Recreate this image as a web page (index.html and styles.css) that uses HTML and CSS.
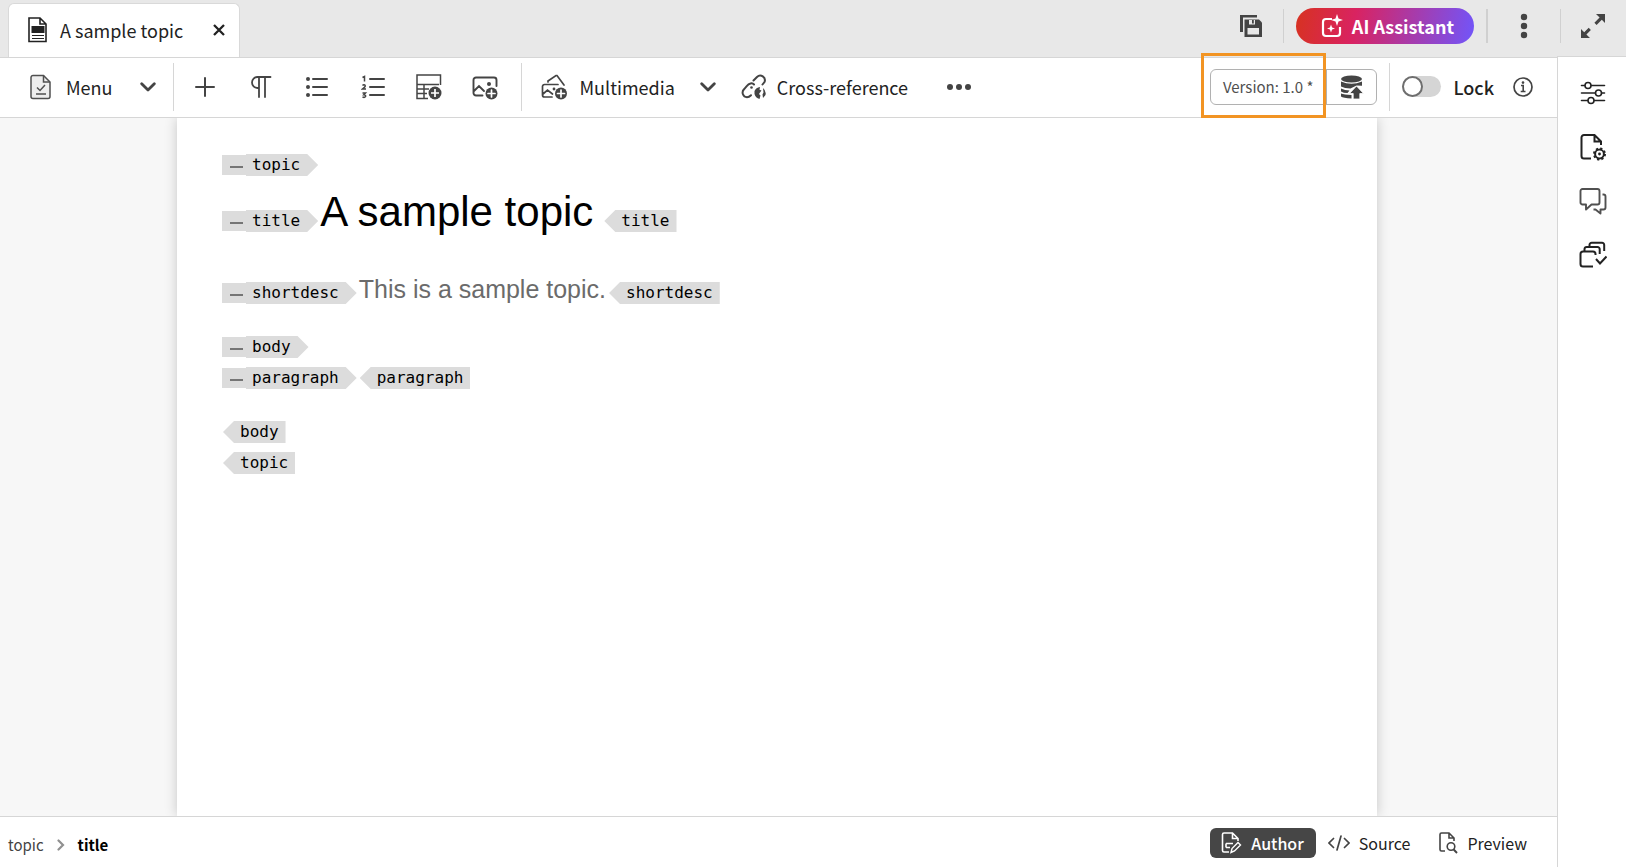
FILE: index.html
```html
<!DOCTYPE html>
<html lang="en">
<head>
<meta charset="utf-8">
<title>A sample topic</title>
<link rel="stylesheet" href="styles.css">
</head>
<body>
<div class="app">
  <header class="tabbar">
    <div class="tab">
      <svg class="icon" width="20" height="26" viewBox="0 0 20 26" fill="none" stroke="#222" stroke-width="1.6"><path d="M1 1h11l6 6v17.500H1zM12 1v6h6"/><path d="M3.500 9h13v7h-13z" fill="#222" stroke="none"/><path d="M4 18.500h12M4 21.500h12" stroke-width="1.200"/></svg>
      <span class="tab-title">A sample topic</span>
      <button class="plain tab-close" aria-label="Close tab"><svg width="12" height="12" viewBox="0 0 12 12" fill="none" stroke="#222" stroke-width="2.300"><path d="M1 1l10 10M11 1L1 11"/></svg></button>
    </div>
    <div class="header-actions">
      <button class="plain save" aria-label="Save all"><svg width="24" height="24" viewBox="0 0 24 24"><path d="M1 1h17v2.500H4V18H1z" fill="#444"/><path d="M5.500 5.500H20l3 3V23H5.500z" fill="#444"/><path d="M10 6h6v4.500h-6zM8.500 14h11.500v6.500H8.500z" fill="#e8e8e8"/><path d="M13 6h1.800v3.500H13z" fill="#444"/></svg></button>
      <span class="bar"></span>
      <button class="ai"><svg width="22" height="24" viewBox="0 0 22 24" fill="none" stroke="#fff" stroke-width="2.200"><path d="M11 5H5a3 3 0 0 0-3 3v11a3 3 0 0 0 3 3h11a3 3 0 0 0 3-3v-6"/><path d="M16 0l1.500 4.500L22 6l-4.500 1.500L16 12l-1.500-4.500L10 6l4.500-1.500zM10 10.500l1.100 3 2.900 1-2.900 1.100L10 18.500l-1.100-2.900L6 14.500l2.900-1z" fill="#fff" stroke="none"/></svg>AI Assistant</button>
      <span class="bar bar-wide"></span>
      <button class="plain more" aria-label="More options"><svg width="8" height="26" viewBox="0 0 8 26" fill="#444"><circle cx="4" cy="4" r="3.200"/><circle cx="4" cy="13" r="3.200"/><circle cx="4" cy="22" r="3.200"/></svg></button>
      <span class="bar"></span>
      <button class="plain expand" aria-label="Expand"><svg width="26" height="26" viewBox="0 0 26 26" fill="#444"><path d="M16 1h9v9l-3.200-3.200-5.200 5.200-2.200-2.200 5.200-5.200zM10 25H1V16l3.200 3.200 4.500-4.500 2.200 2.200-4.500 4.500z"/></svg></button>
    </div>
  </header>

  <main class="editor">
    <div class="toolbar" role="toolbar" aria-label="Editing">
      <button class="plain menu"><svg width="26" height="26" viewBox="0 0 26 26" fill="none" stroke="#505050" stroke-width="1.500"><path d="M6 1.500h10.500L23 8v14.500a2 2 0 0 1-2 2H6a2 2 0 0 1-2-2v-19a2 2 0 0 1 2-2z" fill="#eee"/><path d="M16.500 1.500V8H23M9 20h10M10 13.500l3 3 5-5.500"/></svg><span>Menu</span><svg class="chevron" width="16" height="10" viewBox="0 0 16 10" fill="none" stroke="#444" stroke-width="2.800" stroke-linecap="round" stroke-linejoin="round"><path d="M1.700 1.700L8 8l6.300-6.300"/></svg></button>
      <span class="rule"></span>
      <div class="tools">
        <button class="plain tool" aria-label="Insert element"><svg width="20" height="20" viewBox="0 0 20 20" stroke="#444" stroke-width="2" stroke-linecap="round"><path d="M1 10h18M10 1v18"/></svg></button>
        <button class="plain tool" aria-label="Paragraph"><svg width="24" height="24" viewBox="0 0 24 24" fill="none" stroke="#444" stroke-width="1.800" stroke-linecap="round"><path d="M21.500 2H8.500a5.200 5.200 0 0 0 0 11H10M10 2v20M16 2v20"/></svg></button>
        <button class="plain tool" aria-label="Bulleted list"><svg width="24" height="24" viewBox="0 0 24 24" fill="#444" stroke="#444" stroke-width="2" stroke-linecap="round"><path d="M8 4h14M8 12h14M8 20h14"/><g stroke="none"><circle cx="3" cy="4" r="2"/><circle cx="3" cy="12" r="2"/><circle cx="3" cy="20" r="2"/></g></svg></button>
        <button class="plain tool" aria-label="Numbered list"><svg width="24" height="26" viewBox="0 0 24 26" fill="none" stroke="#444" stroke-width="1.500"><path d="M9 5h14M9 13h14M9 21h14" stroke-width="2" stroke-linecap="round"/><path d="M1.500 3.500l2-1v5M1.500 11.500q1-1 2.300-.5 1 1-.3 2.200L1.500 15h3.500M1.500 19h3l-1.700 1.800q2.200 0 1.700 1.800-1 1.300-3 .4"/></svg></button>
        <button class="plain tool" aria-label="Table"><svg width="26" height="26" viewBox="0 0 26 26" fill="none" stroke="#444" stroke-width="1.500"><path d="M12 24.500H1V1h23.500v10M1 10.500h22M1 15h12M1 19.500h10M8 10.500v14"/><circle cx="19" cy="19" r="6.500" fill="#444" stroke="none"/><path d="M15 19h8M19 15v8" stroke="#fff" stroke-width="1.700"/></svg></button>
        <button class="plain tool" aria-label="Image"><svg width="26" height="26" viewBox="0 0 26 26" fill="none" stroke="#444" stroke-width="1.900" stroke-linecap="round"><path d="M10.500 21.500H4a2.500 2.500 0 0 1-2.500-2.500V6A2.500 2.500 0 0 1 4 3.500h18A2.500 2.500 0 0 1 24.500 6v6M2 17l5-5 5 5"/><circle cx="17" cy="10" r="2" fill="#444" stroke="none"/><circle cx="19.500" cy="19.500" r="6" fill="#444" stroke="none"/><path d="M16 19.500h7M19.500 16v7" stroke="#fff" stroke-width="1.700"/></svg></button>
      </div>
      <span class="rule"></span>
      <button class="plain multimedia"><svg width="26" height="26" viewBox="0 0 26 26" fill="none" stroke="#444" stroke-width="1.700" stroke-linecap="round"><path d="M7 8V7l8-5.500h1L23 11M11 23H3.500A2 2 0 0 1 1.500 21V12.500a2 2 0 0 1 2-2H17M2 20l4.500-4 5 4"/><circle cx="13" cy="15" r="1.400" fill="#444" stroke="none"/><circle cx="20" cy="19.500" r="6" fill="#444" stroke="none"/><path d="M16.500 19.500h7M20 16v7" stroke="#fff"/></svg><span>Multimedia</span><svg class="chevron" width="16" height="10" viewBox="0 0 16 10" fill="none" stroke="#444" stroke-width="2.800" stroke-linecap="round" stroke-linejoin="round"><path d="M1.700 1.700L8 8l6.300-6.300"/></svg></button>
      <button class="plain crossref"><svg width="26" height="26" viewBox="0 0 26 26" fill="none" stroke="#444" stroke-width="2" stroke-linecap="round"><path d="M12.500 6.500l3.500-3.500a4.600 4.600 0 0 1 7.500 5l-2 2.500M13 10.500q-1.500-1.800-3.500-1-2 .5-4 2.800l-2.500 3a4.700 4.700 0 0 0 3 8q2 0 4-2"/><circle cx="10.500" cy="13.500" r="1.300" fill="#444" stroke="none"/><path d="M13.500 17q1.500-3.500 5.500-4l-.5 2.800 2 .7-1.500 2-1 1.500 1.500 1.500-1 3.500q-4-1-5-5zM22 14q3.500 3 2.500 7l-2.500 3-.5-3.500 1-2z" fill="#444" stroke="none"/></svg><span>Cross-reference</span></button>
      <button class="plain overflow" aria-label="More tools"><svg width="26" height="8" viewBox="0 0 26 8" fill="#444"><circle cx="4" cy="4" r="3"/><circle cx="13" cy="4" r="3"/><circle cx="22" cy="4" r="3"/></svg></button>
      <div class="doc-actions">
        <div class="version-group">
          <button class="plain version">Version: 1.0 *</button>
          <button class="plain new-version" aria-label="Save as new version"><svg width="24" height="24" viewBox="0 0 24 24" fill="#444"><ellipse cx="11.500" cy="4" rx="10.500" ry="3.500"/><path d="M1 6.500q10.500 4.500 21 0v4.300l-5.500-.3-6 3q-6 0-9.500-2zM1 13.500q4 2 8.500 2L7.500 18q-4 0-6.500-1.500zM1 18.500q3 1.300 10.500 1.500v3.500Q3 23 1 21.500z"/><path d="M16.500 11l7 7.500h-3.700V24h-6.600v-5.500H9.500z" stroke="#fff" stroke-width=".8"/></svg></button>
          <span class="highlight"></span>
        </div>
        <span class="rule"></span>
        <label class="lock"><input type="checkbox" role="switch"><span>Lock</span></label>
        <button class="plain info" aria-label="Lock information"><svg width="20" height="20" viewBox="0 0 20 20" fill="none" stroke="#444" stroke-width="1.700"><circle cx="10" cy="10" r="9"/><path d="M8 8.500h2.200v5.800M7.700 14.500h4.800" stroke-width="1.600"/><circle cx="10" cy="5.600" r="1.300" fill="#444" stroke="none"/></svg></button>
      </div>
    </div>

    <div class="canvas">
      <article class="page">
        <div class="line"><button class="plain fold" aria-label="Collapse topic"></button><span class="tag open">topic</span></div>
        <div class="line line-title"><button class="plain fold" aria-label="Collapse title"></button><span class="tag open">title</span><h1 class="title">A sample topic</h1><span class="tag close">title</span></div>
        <div class="line line-desc"><button class="plain fold" aria-label="Collapse shortdesc"></button><span class="tag open">shortdesc</span><p class="desc">This is a sample topic.</p><span class="tag close">shortdesc</span></div>
        <div class="line line-block"><button class="plain fold" aria-label="Collapse body"></button><span class="tag open">body</span></div>
        <div class="line line-next"><button class="plain fold" aria-label="Collapse paragraph"></button><span class="tag open">paragraph</span><span class="tag close">paragraph</span></div>
        <div class="line line-block"><span class="tag close">body</span></div>
        <div class="line line-next"><span class="tag close">topic</span></div>
      </article>
    </div>

    <footer class="footer">
      <nav class="crumbs" aria-label="Element path"><a href="#topic">topic</a><svg width="8" height="12" viewBox="0 0 8 12" fill="none" stroke="#909090" stroke-width="2.200" stroke-linecap="round"><path d="M1.500 1.500L6 6l-4.500 4.500"/></svg><a href="#title" class="current">title</a></nav>
      <div class="modes">
        <button class="mode active"><svg width="22" height="22" viewBox="0 0 22 22" fill="none" stroke="#fff" stroke-width="1.600"><path d="M9 20H4a1.500 1.500 0 0 1-1.500-1.500v-16A1.500 1.500 0 0 1 4 1h8.500L18 6.500V9M12.500 1v5.500H18M6 11.500h7M6 15.500h4M6 11.500v4"/><path d="M11 20.500l1-4 6-6 2.500 2.500-6 6z" stroke-width="1.400"/></svg>Author</button>
        <button class="mode"><svg width="22" height="18" viewBox="0 0 22 18" fill="none" stroke="#444" stroke-width="1.700" stroke-linecap="round"><path d="M5.500 4.500L1 9l4.500 4.500M16.500 4.500L21 9l-4.500 4.500M13 2L9 16"/></svg>Source</button>
        <button class="mode preview"><svg width="20" height="22" viewBox="0 0 20 22" fill="none" stroke="#444" stroke-width="1.600"><path d="M7 19H3.500A1.500 1.500 0 0 1 2 17.500v-15A1.500 1.500 0 0 1 3.500 1H11l5 5v3M11 1v5h5"/><circle cx="13" cy="14.500" r="3.800"/><path d="M15.700 17.500L19 21" stroke-width="1.900"/></svg>Preview</button>
      </div>
    </footer>
  </main>

  <aside class="rail" aria-label="Panels">
    <button class="plain rail-item" aria-label="Properties"><svg width="26" height="24" viewBox="0 0 26 24" fill="none" stroke="#222" stroke-width="1.600" stroke-linecap="round"><path d="M1.500 4.500h3M11.500 4.500h13M1.500 12h13.500M22 12h2.500M1.500 19.500h6M14.500 19.500h10"/><circle cx="8" cy="4.500" r="3"/><circle cx="18.500" cy="12" r="3"/><circle cx="11" cy="19.500" r="3"/></svg></button>
    <button class="plain rail-item" aria-label="File properties"><svg width="28" height="28" viewBox="0 0 28 28" fill="none" stroke="#222" stroke-width="2"><path d="M12 25.500H5A2.500 2.500 0 0 1 2.500 23V4.500A2.500 2.500 0 0 1 5 2h10.500L22 8.500V12M15.500 2v6.500H22"/><circle cx="20.500" cy="21" r="4.400"/><circle cx="20.500" cy="21" r="5.500" stroke-dasharray="2.200 2.120"/><circle cx="20.500" cy="21" r="1.400" fill="#222" stroke="none"/></svg></button>
    <button class="plain rail-item" aria-label="Comments"><svg width="28" height="28" viewBox="0 0 28 28" fill="none" stroke="#505050" stroke-width="1.900" stroke-linejoin="round"><path d="M3.500 2h15A2 2 0 0 1 20.500 4v11.500a2 2 0 0 1-2 2H12.500L7 22.500v-5H3.500a2 2 0 0 1-2-2V4a2 2 0 0 1 2-2z"/><path d="M23.500 7.500h1a2 2 0 0 1 2 2V20.500a2 2 0 0 1-2 2H21.500v4l-5-4h-2"/></svg></button>
    <button class="plain rail-item" aria-label="Review tasks"><svg width="28" height="28" viewBox="0 0 28 28" fill="none" stroke="#222" stroke-width="2"><path d="M14 25.500H4A2.500 2.500 0 0 1 1.500 23V13A2.500 2.500 0 0 1 4 10.500h10A2.500 2.500 0 0 1 16.500 13v1M5.500 10V8A2.200 2.200 0 0 1 7.700 6H18.500A2.200 2.200 0 0 1 20.700 8.200V13M10.500 5.500V4A2.200 2.200 0 0 1 12.700 1.700H23A2.200 2.200 0 0 1 25.200 4V10M17 18l4 4.500 6.500-7"/></svg></button>
  </aside>
</div>
</body>
</html>
```
FILE: styles.css
```css
* { box-sizing: border-box; }

body {
  margin: 0;
  font: 18px/24px "Noto Sans CJK SC", "Open Sans", sans-serif;
  color: #222;
  background: #fff;
}

button { font: inherit; color: inherit; cursor: pointer; }
svg { display: block; flex: none; }

.plain {
  display: flex;
  align-items: center;
  padding: 0;
  border: 0;
  background: none;
}

.app {
  display: grid;
  grid-template-columns: 1fr 69px;
  grid-template-rows: 57px 1fr;
  min-height: 100vh;
}

/* Tab bar */
.tabbar {
  grid-column: 1 / -1;
  display: flex;
  justify-content: space-between;
  padding-left: 8px;
  background: #e8e8e8;
}
.tab {
  display: flex;
  align-items: center;
  margin-top: 3px;
  padding: 0 14px 2px 19px;
  border: 1px solid #d9d9d9;
  border-bottom: 0;
  border-radius: 6px 6px 0 0;
  background: #fff;
}
.tab-title { margin: 0 30px 0 12px; }
.header-actions { display: flex; align-items: center; padding: 0 20px 6px 0; }
.bar { width: 1px; height: 34px; background: #d0d0d0; }
.bar-wide { width: 2px; margin-left: 12px; }
.save { margin-right: 20px; }
.ai {
  display: flex;
  align-items: center;
  gap: 9px;
  height: 36px;
  margin-left: 12px;
  padding: 0 20px 0 25px;
  border: 0;
  border-radius: 18px;
  color: #fff;
  font-weight: 700;
  background: linear-gradient(100deg, #d73220 0%, #d92361 33%, #7155fa 100%);
}
.more { margin: 0 32px; }
.expand { margin-left: 19px; }

/* Editor column */
.editor {
  display: flex;
  flex-direction: column;
  min-width: 0;
  border-top: 1px solid #d6d6d6;
}
.toolbar {
  display: flex;
  align-items: center;
  height: 60px;
  padding: 0 0 2px 27px;
  border-bottom: 1px solid #d6d6d6;
}
.rule { width: 1px; height: 48px; background: #d6d6d6; }
.menu { gap: 13px; margin-right: 17px; }
.menu .chevron { margin-left: 14px; }
.tools { display: flex; margin: 0 8px 0 3px; }
.tool { justify-content: center; width: 56px; height: 40px; }
.multimedia { gap: 13px; margin-left: 19px; }
.multimedia .chevron { margin-left: 12px; }
.crossref { gap: 10px; margin-left: 25px; }
.overflow { margin-left: 38px; }
.doc-actions { display: flex; align-items: center; margin-left: auto; padding-right: 24px; }
.version-group {
  position: relative;
  display: flex;
  height: 36px;
  margin-right: 12px;
  border: 1px solid #b1b1b1;
  border-radius: 6px;
}
.version { padding: 0 13px 0 12px; color: #505050; font-size: 15px; }
.new-version { justify-content: center; width: 50px; border-left: 1px solid #b1b1b1; }
.highlight {
  position: absolute;
  inset: -17px 50px -14px -10px;
  border: 3px solid #f29423;
  pointer-events: none;
}
.lock { display: flex; align-items: center; gap: 12px; margin-left: 12px; font-weight: 500; }
.lock input {
  appearance: none;
  display: flex;
  align-items: center;
  width: 39px;
  height: 21px;
  margin: 0;
  border-radius: 11px;
  background: #d5d5d5;
}
.lock input::before {
  content: "";
  box-sizing: border-box;
  width: 21px;
  height: 21px;
  border: 2px solid #6e6e6e;
  border-radius: 50%;
  background: #fff;
}
.lock input:checked { justify-content: flex-end; background: #6e6e6e; }
.info { margin-left: 19px; }

/* Document */
.canvas {
  flex: 1;
  display: flex;
  justify-content: center;
  padding-right: 3px;
  overflow: hidden;
  background: #f7f7f7;
}
.page {
  width: 1200px;
  padding: 36px 45px;
  background: #fff;
  box-shadow: 0 0 12px rgba(0, 0, 0, 0.2);
}
.line { display: flex; align-items: baseline; }
.line-title { margin-top: 12px; }
.line-desc { margin-top: 39px; }
.line-block { margin-top: 32px; }
.line-next { margin-top: 9px; }
.fold {
  align-self: flex-end;
  justify-content: center;
  width: 24px;
  height: 20px;
  margin-bottom: 1px;
  padding-left: 5px;
  background: #dcdcdc;
}
.line-title .fold { margin-bottom: 5px; }
.fold::before { content: ""; width: 13px; height: 2px; margin-top: 3px; background: #757575; }
.tag {
  height: 22px;
  padding: 1px 7px 0 6px;
  background: #dcdcdc;
  color: #000;
  font: 16px/20px "DejaVu Sans Mono", monospace;
}
.open {
  padding-right: 18px;
  clip-path: polygon(0 0, calc(100% - 11px) 0, 100% 50%, calc(100% - 11px) 100%, 0 100%);
}
.close {
  margin-left: 1px;
  padding-left: 17px;
  clip-path: polygon(11px 0, 100% 0, 100% 100%, 11px 100%, 0 50%);
}
.open + .close, .desc + .close { margin-left: 3px; }
.title, .desc { margin: 0 0 0 2px; font-family: "Liberation Sans", Arial, sans-serif; font-weight: 400; }
.title { margin-right: 10px; color: #000; font-size: 42px; line-height: 48px; }
.desc { color: #6b6b6b; font-size: 25px; line-height: 28px; }

/* Footer */
.footer {
  display: flex;
  align-items: center;
  justify-content: space-between;
  height: 51px;
  padding: 2px 18px 0 8px;
  border-top: 1px solid #d6d6d6;
  font-size: 16px;
}
.crumbs { display: flex; align-items: center; gap: 13px; padding-top: 3px; font-size: 15px; }
.crumbs a { color: #444; text-decoration: none; }
.crumbs .current { color: #000; font-weight: 700; }
.modes { display: flex; }
.mode {
  display: flex;
  align-items: center;
  gap: 9px;
  height: 30px;
  padding: 0 12px;
  border: 0;
  border-radius: 6px;
  background: none;
}
.preview { margin-left: 4px; }
.active { padding-left: 10px; background: #464646; color: #fff; font-weight: 500; }

/* Right rail */
.rail {
  display: flex;
  flex-direction: column;
  align-items: center;
  gap: 14px;
  margin-top: -1px;
  padding: 16px 0 0 2px;
  border: solid #d6d6d6;
  border-width: 1px 0 0 1px;
  background: #fff;
}
.rail-item { justify-content: center; width: 40px; height: 40px; }
```
